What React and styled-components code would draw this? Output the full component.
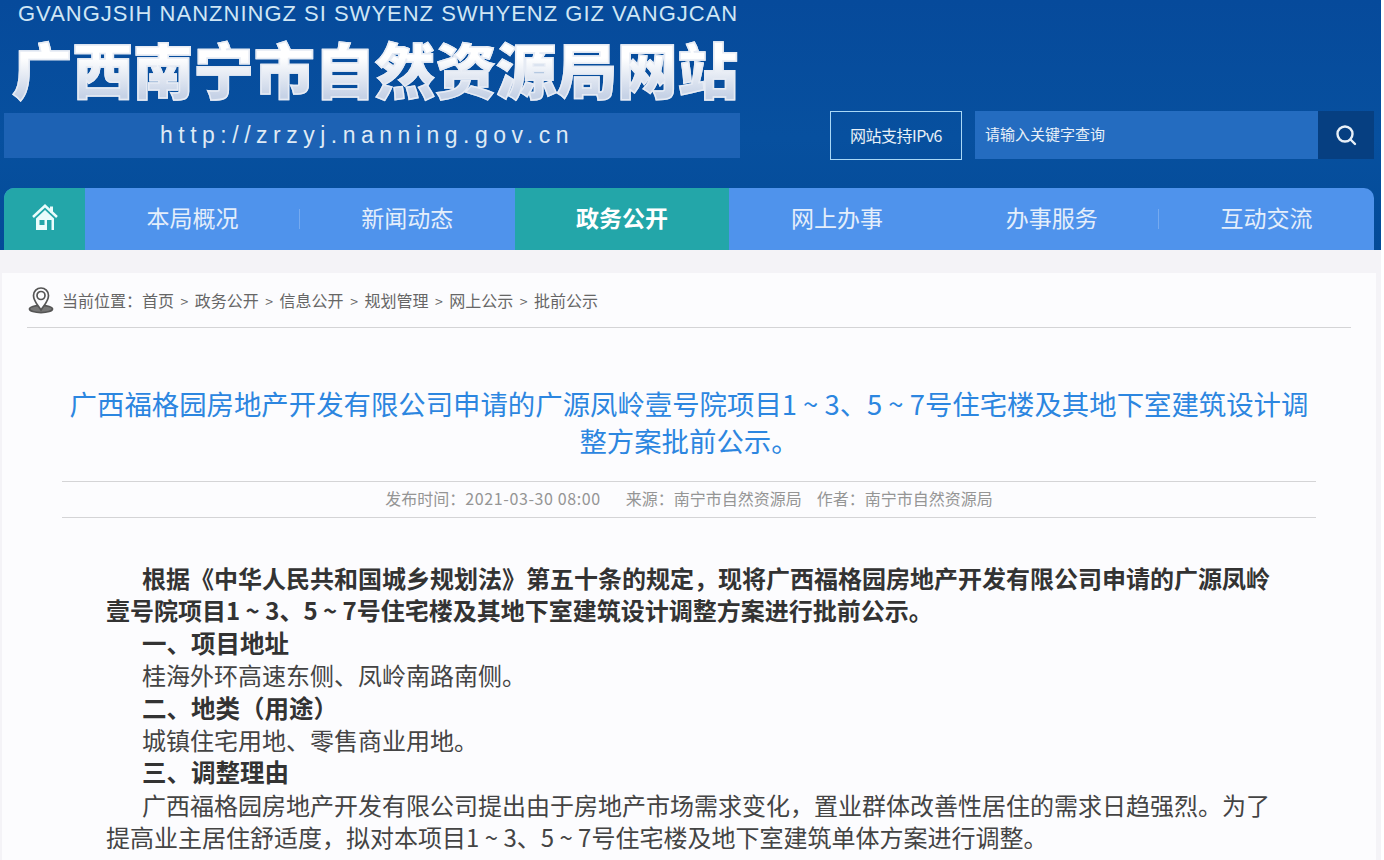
import React from 'react';
import styled, { createGlobalStyle } from 'styled-components';

const navItems = ['本局概况', '新闻动态', '政务公开', '网上办事', '办事服务', '互动交流'];
const crumbs = ['首页', '政务公开', '信息公开', '规划管理', '网上公示', '批前公示'];

const GlobalStyle = createGlobalStyle`
    html, body {
        margin: 0;
        height: 860px;
        overflow: hidden;
        background: #fff;
        font-family: "Liberation Sans", "Noto Sans CJK SC", sans-serif;
    }
`;

const App = () => (
    <Page>
        <GlobalStyle />
        <Header>
            <HeaderTop>
                <Brand>
                    <Pinyin>GVANGJSIH NANZNINGZ SI SWYENZ SWHYENZ GIZ VANGJCAN</Pinyin>
                    <SiteName>广西南宁市自然资源局网站</SiteName>
                    <UrlBar>http://zrzyj.nanning.gov.cn</UrlBar>
                </Brand>
                <Tools>
                    <Ipv6>网站支持IPv6</Ipv6>
                    <Search>
                        <SearchText>请输入关键字查询</SearchText>
                        <SearchButton>
                            <svg width="24" height="24" viewBox="0 0 24 24" fill="none" stroke="#e8f0f8" strokeWidth="2.4" strokeLinecap="round">
                                <circle cx="11" cy="11" r="7.500" />
                                <path d="M16.500 16.500L21 21" />
                            </svg>
                        </SearchButton>
                    </Search>
                </Tools>
            </HeaderTop>
            <Nav>
                <HomeTab>
                    <svg width="28" height="28" viewBox="0 0 28 28">
                        <path d="M2 14L14 2.800 26 14" fill="none" stroke="#eafcfc" strokeWidth="2.500" />
                        <path d="M19 3.500h3v6h-3z" fill="#eafcfc" />
                        <path fillRule="evenodd" fill="#eafcfc" d="M14 7L5 15.500V27H23V15.500zM8.500 17h5v5h-5zM16 17h4.500v10H16z" />
                    </svg>
                </HomeTab>
                {navItems.map((item, i) => (
                    <NavItem key={item} active={i === 2} divided={i === 0 || i === 4}>{item}</NavItem>
                ))}
            </Nav>
        </Header>
        <Card>
            <Breadcrumb>
                <svg width="28" height="28" viewBox="0 0 28 28" fill="none" stroke="#555" strokeWidth="1.700">
                    <ellipse cx="14" cy="23" rx="11.500" ry="3.600" fill="#777" />
                    <path d="M14 24C10 18 6.500 15 6.500 9.500a7.500 7.500 0 0 1 15 0C21.500 15 18 18 14 24z" fill="#fcfcfe" />
                    <circle cx="14" cy="9.500" r="4" />
                </svg>
                <CrumbTrail>
                    当前位置：{crumbs.map((c, i) => (
                        <React.Fragment key={c}>
                            {i > 0 && <CrumbSep>&gt;</CrumbSep>}
                            {c}
                        </React.Fragment>
                    ))}
                </CrumbTrail>
            </Breadcrumb>
            <Title>广西福格园房地产开发有限公司申请的广源凤岭壹号院项目1 ~ 3、5 ~ 7号住宅楼及其地下室建筑设计调整方案批前公示。</Title>
            <Meta>
                <MetaLabel>发布时间：<DateText>2021-03-30 08:00</DateText></MetaLabel>
                <MetaLabel gap="15px">来源：南宁市自然资源局</MetaLabel>
                <MetaLabel gap="0">作者：南宁市自然资源局</MetaLabel>
            </Meta>
            <Article>
                <Para bold>根据《中华人民共和国城乡规划法》第五十条的规定，现将广西福格园房地产开发有限公司申请的广源凤岭壹号院项目1 ~ 3、5 ~ 7号住宅楼及其地下室建筑设计调整方案进行批前公示。</Para>
                <SubHead bold>一、项目地址</SubHead>
                <Para>桂海外环高速东侧、凤岭南路南侧。</Para>
                <SubHead bold>二、地类（用途）</SubHead>
                <Para>城镇住宅用地、零售商业用地。</Para>
                <SubHead bold>三、调整理由</SubHead>
                <Para>广西福格园房地产开发有限公司提出由于房地产市场需求变化，置业群体改善性居住的需求日趋强烈。为了提高业主居住舒适度，拟对本项目1 ~ 3、5 ~ 7号住宅楼及地下室建筑单体方案进行调整。</Para>
            </Article>
        </Card>
    </Page>
);

export default App;

const Page = styled.div`
    width: 1381px;
    height: 860px;
    overflow: hidden;
    background: #f4f3f7;
`;

const Header = styled.header`
    height: 250px;
    box-sizing: border-box;
    padding: 0 7px 0 4px;
    display: flex;
    flex-direction: column;
    background: linear-gradient(180deg, #064a9b 0%, #07509f 55%, #034b98 100%);
`;

const HeaderTop = styled.div`
    height: 188px;
    display: flex;
    justify-content: space-between;
`;

const Brand = styled.div`
    width: 736px;
    display: flex;
    flex-direction: column;
    align-items: stretch;
`;

const Pinyin = styled.div`
    height: 28px;
    line-height: 28px;
    padding-left: 14px;
    font-size: 22px;
    letter-spacing: 1px;
    color: #cfe6f5;
    white-space: nowrap;
`;

const SiteName = styled.div`
    height: 85px;
    line-height: 80px;
    padding-left: 8px;
    font-family: "Noto Sans CJK SC", sans-serif;
    font-weight: 900;
    font-size: 60.500px;
    white-space: nowrap;
    background: linear-gradient(180deg, #ffffff 35%, #c6d2e6 80%);
    -webkit-background-clip: text;
    background-clip: text;
    color: transparent;
    -webkit-text-stroke: 1.500px #e6ebf4;
`;

const UrlBar = styled.div`
    height: 45px;
    line-height: 44px;
    box-sizing: border-box;
    padding-right: 10px;
    text-align: center;
    background: #1d62b4;
    color: #dfeaf5;
    font-size: 23px;
    letter-spacing: 5.500px;
`;

const Tools = styled.div`
    display: flex;
    align-items: flex-start;
    gap: 13px;
    padding-top: 111px;
`;

const Ipv6 = styled.div`
    width: 130px;
    height: 45px;
    padding-bottom: 2px;
    box-sizing: content-box;
    border: 1px solid #a9d8f6;
    display: flex;
    align-items: center;
    justify-content: center;
    color: #e8f0f8;
    font-family: "Noto Sans CJK SC", sans-serif;
    font-size: 16px;
    letter-spacing: -0.500px;
`;

const Search = styled.div`
    width: 399px;
    height: 48px;
    display: flex;
    background: #246cc0;
`;

const SearchText = styled.div`
    flex: 1;
    padding-left: 10px;
    line-height: 46px;
    color: #e8f0f8;
    font-family: "Noto Sans CJK SC", sans-serif;
    font-size: 15px;
`;

const SearchButton = styled.div`
    width: 56px;
    display: flex;
    align-items: center;
    justify-content: center;
    background: #063f81;
`;

const Nav = styled.nav`
    height: 62px;
    display: flex;
    background: #4f93ec;
    border-radius: 10px 10px 0 0;
    overflow: hidden;
`;

const HomeTab = styled.div`
    width: 81px;
    padding-bottom: 4px;
    box-sizing: border-box;
    display: flex;
    align-items: center;
    justify-content: center;
    background: #23a6a9;
`;

const NavItem = styled.div`
    flex: 1;
    position: relative;
    padding-bottom: 4px;
    display: flex;
    align-items: center;
    justify-content: center;
    color: ${props => props.active ? '#fff' : '#e4eefb'};
    background: ${props => props.active ? '#23a6a9' : 'transparent'};
    font-family: "Noto Sans CJK SC", sans-serif;
    font-size: 23px;
    font-weight: ${props => props.active ? 700 : 400};

    &::after {
        content: '';
        display: ${props => props.divided ? 'block' : 'none'};
        position: absolute;
        top: 21px;
        right: 0;
        width: 1px;
        height: 20px;
        background: #75aaf0;
    }
`;

const Card = styled.main`
    box-sizing: border-box;
    width: 1374px;
    height: 587px;
    margin: 23px 0 0 2px;
    padding: 0 25px;
    background: #fcfcfe;
`;

const Breadcrumb = styled.div`
    height: 54px;
    display: flex;
    align-items: center;
    gap: 7px;
    border-bottom: 1px solid #d4d4d6;
`;

const CrumbTrail = styled.div`
    font-family: "Noto Sans CJK SC", sans-serif;
    font-size: 16px;
    color: #666;
`;

const CrumbSep = styled.span`
    margin: 0 6.500px;
    font-size: 14px;
`;

const Title = styled.h1`
    margin: 57px 0 0 35px;
    width: 1254px;
    text-align: center;
    font-family: "Noto Sans CJK SC", sans-serif;
    font-size: 27.400px;
    font-weight: 400;
    line-height: 36.500px;
    color: #2c86e0;
`;

const Meta = styled.div`
    box-sizing: border-box;
    margin: 23px 0 0 35px;
    width: 1254px;
    height: 37px;
    padding-bottom: 4px;
    display: flex;
    align-items: center;
    justify-content: center;
    border-top: 1px solid #d4d4d6;
    border-bottom: 1px solid #d4d4d6;
    font-family: "Noto Sans CJK SC", sans-serif;
    font-size: 16px;
    color: #959595;
`;

const MetaLabel = styled.span`
    margin-right: ${props => props.gap || '25px'};
`;

const DateText = styled.span`
    letter-spacing: 0.600px;
`;

const Article = styled.article`
    margin: 44px 0 0 79px;
    width: 1166px;
`;

const Para = styled.p`
    margin: 0;
    text-indent: 36px;
    font-family: "Noto Sans CJK SC", sans-serif;
    font-size: 24px;
    line-height: 32.400px;
    font-weight: ${props => props.bold ? 700 : 400};
    color: ${props => props.bold ? '#333' : '#444'};
`;

const SubHead = styled(Para)`
    font-size: 24.500px;
`;
